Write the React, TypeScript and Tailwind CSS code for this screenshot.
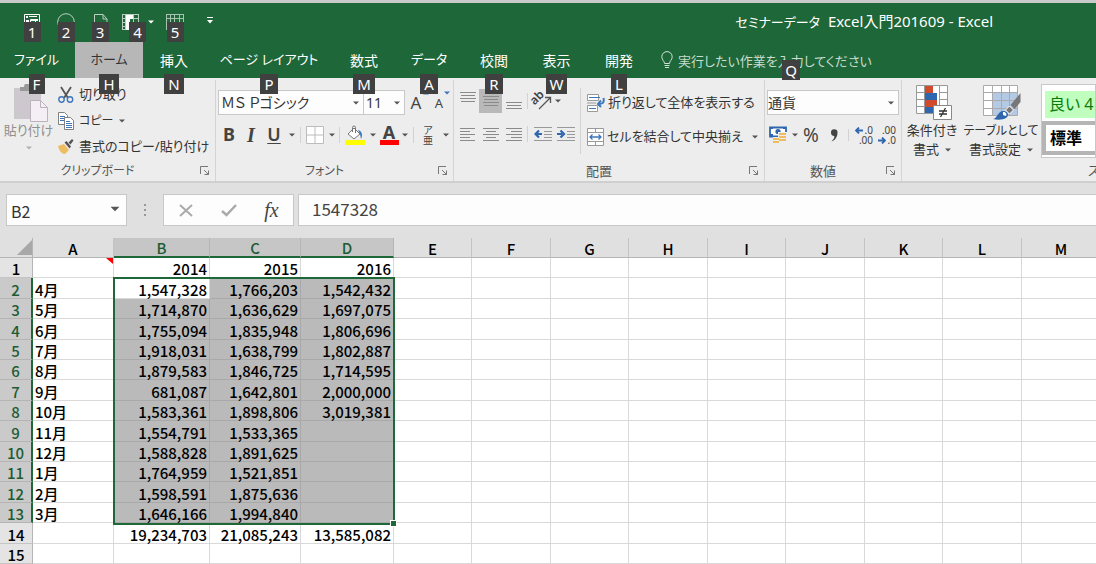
import React from "react";
import type { ReactNode } from "react";

const UI = "font-['Noto_Sans','Noto_Sans_CJK_JP',sans-serif] [font-feature-settings:'palt']";

function KeyTip({ children, className = "" }: { children: string; className?: string }) {
  return (
    <span
      className={`pointer-events-none absolute z-10 flex h-5 items-center justify-center bg-[#404040] px-1 text-[15px] leading-5 text-white ${className}`}
    >
      {children}
    </span>
  );
}

function Arrow({ className = "text-[#555]" }: { className?: string }) {
  return (
    <svg width="6" height="4" viewBox="0 0 6 4" className={`shrink-0 ${className}`} aria-hidden="true">
      <path d="M0 0.5h6L3 3.5z" fill="currentColor" />
    </svg>
  );
}

function Btn({ label, className, children }: { label: string; className: string; children: ReactNode }) {
  return (
    <button type="button" aria-label={label} className={`flex shrink-0 items-center justify-center ${className}`}>
      {children}
    </button>
  );
}

function Sep({ className = "h-4" }: { className?: string }) {
  return <span className={`w-px shrink-0 bg-[#d2d2d2] ${className}`} />;
}

function Lines({ rows, y = 1 }: { rows: [number, number][]; y?: number }) {
  return (
    <svg width="16" height="24" viewBox="0 0 16 24" aria-hidden="true">
      {rows.map(([a, b], i) => (
        <path key={i} d={`M${a} ${y + i * 3 + 0.5}H${b}`} stroke="#8a8a8a" strokeWidth="1" />
      ))}
    </svg>
  );
}

function Group({
  title,
  className,
  titleSize = "text-[13px]",
  children,
}: {
  title: string;
  className: string;
  titleSize?: string;
  children: ReactNode;
}) {
  return (
    <section aria-label={title} className={`flex shrink-0 flex-col border-r border-[#d4d4d4] ${className}`}>
      <div className="flex h-[82px]">{children}</div>
      <div className="flex h-5 items-center pr-1">
        <span className={`flex-1 pr-1 text-center leading-[18px] text-[#555] ${titleSize}`}>{title}</span>
        <Btn label={`${title}の設定`} className="size-3">
          <svg width="10" height="10" viewBox="0 0 10 10" fill="none" stroke="#777" aria-hidden="true">
            <path d="M0.5 8V0.5H8M4 4l4.5 4.5M8.5 4.5v4h-4" />
          </svg>
        </Btn>
      </div>
    </section>
  );
}

function Drop({
  label,
  value,
  className,
  arrow = "right-1",
  pad = "pl-0.5",
}: {
  label: string;
  value: string;
  className: string;
  arrow?: string;
  pad?: string;
}) {
  return (
    <div className={`relative flex shrink-0 items-center border border-[#c8c8c8] bg-[#fdfdfd] ${className}`}>
      <select
        aria-label={label}
        defaultValue={value}
        className={`h-full w-full appearance-none bg-transparent text-[#333] outline-none [font-feature-settings:'palt'] ${pad}`}
      >
        <option>{value}</option>
      </select>
      <Arrow className={`pointer-events-none absolute text-[#555] ${arrow}`} />
    </div>
  );
}

const TABS: [string, string, string][] = [
  ["ファイル", "F", "w-[73px] text-[13px]"],
  ["ホーム", "H", "w-[70px] text-[13px]"],
  ["挿入", "N", "w-[62px]"],
  ["ページ レイアウト", "P", "w-32 text-[13px]"],
  ["数式", "M", "w-[62px]"],
  ["データ", "A", "w-[68px] text-[13px]"],
  ["校閲", "R", "w-[62px]"],
  ["表示", "W", "w-[63px]"],
  ["開発", "L", "w-[62px]"],
];

function TitleBar() {
  return (
    <header className="flex h-[39px] text-white">
      <div className="flex w-[230px] shrink-0 pt-[9px] pl-[23px]">
        <Btn label="上書き保存" className="relative h-5 w-[18px]">
          <svg width="18" height="18" viewBox="0 0 18 18" fill="none" stroke="#fff" aria-hidden="true">
            <path d="M1.500 1.500h15v15h-15z" />
            <path d="M3 3h2v2H3zM6 3h8v1H6zM3 7h3v3H3zM8 6h7v2H8z" fill="#fff" stroke="none" />
            <path d="M7.500 10V6.500h2M12.500 6v4" />
          </svg>
          <KeyTip className="top-[10px] w-[17px]">1</KeyTip>
        </Btn>
        <Btn label="円" className="relative ml-4 h-5 w-[18px]">
          <svg width="18" height="18" viewBox="0 0 18 18" fill="none" stroke="#b9d0c1" aria-hidden="true">
            <circle cx="9" cy="9" r="8.3" />
          </svg>
          <KeyTip className="top-[10px] w-[17px]">2</KeyTip>
        </Btn>
        <Btn label="新規作成" className="relative ml-4 h-5 w-[18px]">
          <svg width="18" height="18" viewBox="0 0 18 18" fill="none" stroke="#b9d0c1" aria-hidden="true">
            <path d="M3.500 16.500V1.500h8.500l4 4.500v10.500zM12 1.500V6h4" />
          </svg>
          <KeyTip className="top-[10px] w-[17px]">3</KeyTip>
        </Btn>
        <Btn label="ウィンドウ枠の固定" className="relative ml-3 h-5 w-[18px]">
          <svg width="18" height="18" viewBox="0 0 18 18" fill="none" stroke="#b9d0c1" aria-hidden="true">
            <path d="M1 1.500h17M1 5.500h17M1 9.500h17M1 13.500h17M1 16.500h17M1.500 1v16M4.500 1v16M12.500 1v16M17.500 1v16" />
            <path d="M5 2h7v4H9v11H5z" fill="#fff" stroke="none" />
          </svg>
          <KeyTip className="top-[10px] left-[8px] w-[17px]">4</KeyTip>
        </Btn>
        <Btn label="枠固定の一覧" className="ml-2 h-5 w-[8px]">
          <Arrow className="text-white" />
        </Btn>
        <Btn label="テーブル" className="relative ml-[11px] h-5 w-[18px]">
          <svg width="18" height="18" viewBox="0 0 18 18" fill="none" stroke="#a5c3b0" aria-hidden="true">
            <path d="M0 1.500h18M0 5.500h18M0 9.500h18M0 13.500h18M0.500 1v16M4.500 1v16M8.500 1v16M13.500 1v16M17.500 1v16" />
          </svg>
          <KeyTip className="top-[10px] w-[17px]">5</KeyTip>
        </Btn>
        <Btn label="クイック アクセス ツール バーのカスタマイズ" className="ml-5 h-4 w-3">
          <svg width="6" height="7" viewBox="0 0 6 7" fill="#fff" aria-hidden="true">
            <path d="M0 0h6v1H0zM0 3h6L3 6.500z" />
          </svg>
        </Btn>
      </div>
      <h1 className="flex-1 pr-[103px] text-right text-[15px] leading-9 whitespace-pre">
        <span className="text-[13px]">セミナーデータ</span>
        {"  Excel入門201609 - Excel"}
      </h1>
    </header>
  );
}

function Tabs() {
  return (
    <nav className="flex h-9 text-[14px] text-white">
      {TABS.map(([name, key, w], i) => (
        <button
          key={key}
          type="button"
          className={`relative flex shrink-0 items-center justify-center whitespace-nowrap ${w} ${
            i === 1 ? "border-l-2 border-[#1e6738] bg-[#b7b7b7] text-[#333]" : ""
          }`}
        >
          {name}
          <KeyTip className="top-8 min-w-4">{key}</KeyTip>
        </button>
      ))}
      <label className="relative flex items-center gap-[5px] pl-[11px]">
        <svg width="12" height="18" viewBox="0 0 12 18" fill="none" stroke="#cfe0d5" aria-hidden="true">
          <path d="M3.500 12.500C3.500 10 0.800 9 0.800 5.800a5.200 5.200 0 0 1 10.400 0C11.200 9 8.500 10 8.500 12.500zM3.500 14.500h5M4 16.500h4" />
        </svg>
        <input
          placeholder="実行したい作業を入力してください"
          aria-label="操作アシスト"
          className="w-[230px] bg-transparent pt-1 text-[13px] outline-none placeholder:text-[#c9dccf] placeholder:opacity-100"
        />
        <KeyTip className="top-[18px] left-[132px] w-[18px]">Q</KeyTip>
      </label>
    </nav>
  );
}

function Clipboard() {
  return (
    <Group title="クリップボード" titleSize="text-[12px]" className="w-[216px]">
      <button type="button" className="flex w-[57px] shrink-0 flex-col items-center pt-1 text-[13px] text-[#8f8f8f]">
        <svg width="36" height="38" viewBox="0 0 36 38" aria-hidden="true" className="ml-1">
          <path d="M1 4h27v31H1z" fill="#cdc8cd" />
          <path d="M7 7V3h4a4 4 0 0 1 8 0h4v4z" fill="#999" />
          <path d="M17.500 16.500h10l7 7v14h-17z" fill="#f4eef5" stroke="#bcb2bd" />
          <path d="M27.500 16.500v7h7" fill="none" stroke="#bcb2bd" />
        </svg>
        <span className="leading-4">貼り付け</span>
        <Arrow className="mt-2 text-[#b0b0b0]" />
      </button>
      <div className="flex flex-col pt-0.5 text-[13px] text-[#333]">
        <button type="button" className="flex h-[26px] items-center gap-1">
          <svg width="18" height="18" viewBox="0 0 18 18" fill="none" aria-hidden="true">
            <path d="M4 1l7 11M14 1L7 12" stroke="#555" strokeWidth="1.800" />
            <circle cx="4.500" cy="13.500" r="2.700" stroke="#3d76bb" strokeWidth="1.400" />
            <circle cx="13" cy="13.500" r="2.700" stroke="#3d76bb" strokeWidth="1.400" />
          </svg>
          切り取り
        </button>
        <button type="button" className="flex h-[26px] items-center gap-1">
          <svg width="18" height="18" viewBox="0 0 18 18" fill="#fff" stroke="#808080" aria-hidden="true">
            <path d="M1.500 0.500h6l3 3v9h-9z" />
            <path d="M3 4.500h5M3 6.500h6M3 8.500h6" stroke="#3d76bb" />
            <path d="M7.500 5.500h6l3 3v9h-9z" />
            <path d="M9 9.500h4M9 11.500h6M9 13.500h6M9 15.500h6" stroke="#3d76bb" />
          </svg>
          <span className="text-[12px]">コピー</span>
          <Arrow className="ml-0.5 text-[#555]" />
        </button>
        <button type="button" className="flex h-[26px] items-center gap-1 whitespace-nowrap">
          <svg width="18" height="18" viewBox="0 0 18 18" aria-hidden="true">
            <path d="M1 8l6-2 5 6-4 4c-3 0-6-3-7-8z" fill="#edbd62" />
            <path d="M7.500 4.500L9.500 3l4.500 5.500-1.500 2z" fill="#555" />
            <path d="M11.500 4.500L15 1l1.500 1.500-3 4z" fill="#555" />
          </svg>
          書式のコピー/貼り付け
        </button>
      </div>
    </Group>
  );
}

function FontGroup() {
  return (
    <Group title="フォント" titleSize="text-[12px]" className="w-[238px]">
      <div className="flex flex-col pl-0.5 text-[#444]">
        <div className="flex items-center pt-2.5 text-[14px]">
          <Drop label="フォント名" value="ＭＳ Ｐゴシック" className="h-[25px] w-[146px]" />
          <Drop label="フォント サイズ" value="11" className="-ml-px h-[25px] w-[42px]" />
          <Btn label="フォント サイズの拡大" className="relative ml-0.5 w-[18px] text-[17px] leading-6">
            A<Arrow className="absolute top-0 -right-1 rotate-180 text-[#3d76bb]" />
          </Btn>
          <Btn label="フォント サイズの縮小" className="relative ml-[5px] w-[18px] text-[13px] leading-6">
            A<Arrow className="absolute top-0 -right-0.5 text-[#3d76bb]" />
          </Btn>
        </div>
        <div className="flex h-[39px] items-center text-[18px]">
          <Btn label="太字" className="w-[22px] font-bold">B</Btn>
          <Btn label="斜体" className="w-[22px] font-['Liberation_Serif',serif] text-[20px] font-bold italic">I</Btn>
          <Btn label="下線" className="w-6 font-semibold underline underline-offset-2">U</Btn>
          <Btn label="下線の種類" className="w-3"><Arrow /></Btn>
          <Sep className="ml-[2px] h-4" />
          <Btn label="罫線" className="w-[27px]">
            <svg width="18" height="18" viewBox="0 0 18 18" fill="#fff" stroke="#bcbcbc" aria-hidden="true">
              <path d="M0.500 0.500h17v17H0.500zM9 0.500v17M0.500 9h17" />
            </svg>
          </Btn>
          <Btn label="罫線の種類" className="w-2"><Arrow /></Btn>
          <Sep className="ml-[3px] h-4" />
          <Btn label="塗りつぶしの色" className="ml-px w-7">
            <svg width="20" height="20" viewBox="0 0 20 20" aria-hidden="true">
              <path d="M0 15h20v5H0z" fill="#ff0" />
              <path d="M9 3l6 6-6 5-6-5z" fill="#fff" stroke="#777" />
              <path d="M7.500 7V2.500a1.500 1.500 0 0 1 3 0V8" fill="none" stroke="#777" />
              <path d="M13 5c4 1 5 5 3 9l-1-5z" fill="#3d76bb" />
            </svg>
          </Btn>
          <Btn label="塗りつぶしの色の一覧" className="w-2"><Arrow /></Btn>
          <Btn label="フォントの色" className="w-6 flex-col">
            <span className="font-bold leading-4">A</span>
            <span className="h-[5px] w-[19px] bg-[#f00]" />
          </Btn>
          <Btn label="フォントの色の一覧" className="w-2"><Arrow /></Btn>
          <Sep className="ml-1 h-4" />
          <Btn label="ふりがな" className="w-7 flex-col text-[10px] leading-[10px]">
            <span>ア</span>
            <span>亜</span>
          </Btn>
          <Btn label="ふりがなの一覧" className="w-2"><Arrow /></Btn>
        </div>
      </div>
    </Group>
  );
}

function Alignment() {
  return (
    <Group title="配置" className="w-[311px]">
      <div className="flex w-[126px] shrink-0 flex-col pl-[3px] text-[#444]">
        <div className="flex items-center pt-[9px]">
          <Btn label="上揃え" className="h-6 w-[22px]"><Lines rows={[[0, 16], [1, 15], [0, 16], [1, 15]]} y={3} /></Btn>
          <Btn label="上下中央揃え" className="h-6 w-[23px] bg-[#b9b9b9]"><Lines rows={[[0, 16], [1, 15], [0, 16], [1, 15]]} y={7} /></Btn>
          <Btn label="下揃え" className="h-6 w-[23px]"><Lines rows={[[0, 16], [1, 15], [0, 16]]} y={13} /></Btn>
          <Sep className="ml-0.5 h-4" />
          <Btn label="方向" className="ml-1.5 w-[18px]">
            <svg width="18" height="18" viewBox="0 0 18 18" className="overflow-visible" aria-hidden="true">
              <text x="0" y="12" fontSize="12" fontWeight="600" fill="#444" transform="rotate(-45 2 12)">ab</text>
              <path d="M5 17L16 6M11 5.500h5.500V11" fill="none" stroke="#555" strokeWidth="1.300" />
            </svg>
          </Btn>
          <Btn label="方向の一覧" className="ml-[2px] w-2"><Arrow /></Btn>
        </div>
        <div className="flex h-[42px] items-center">
          <Btn label="左揃え" className="w-[22px]"><Lines rows={[[0, 15], [0, 10], [0, 15], [0, 10], [0, 15]]} y={6} /></Btn>
          <Btn label="中央揃え" className="w-6"><Lines rows={[[0, 16], [3, 13], [0, 16], [3, 13], [0, 16]]} y={6} /></Btn>
          <Btn label="右揃え" className="w-[22px]"><Lines rows={[[0, 16], [5, 16], [0, 16], [5, 16], [0, 16]]} y={6} /></Btn>
          <Sep className="ml-0.5 h-4" />
          <Btn label="インデントを減らす" className="ml-1.5 w-[18px]">
            <svg width="18" height="14" viewBox="0 0 18 14" aria-hidden="true">
              <path d="M0 0.500h18M10 4.500h8M10 7.500h8M10 10.500h8M0 13.500h18" stroke="#999" />
              <path d="M8 7H3M5 3.500L1.500 7 5 10.500" stroke="#2f67ae" strokeWidth="2.200" fill="none" />
            </svg>
          </Btn>
          <Btn label="インデントを増やす" className="ml-[5px] w-[18px]">
            <svg width="18" height="14" viewBox="0 0 18 14" aria-hidden="true">
              <path d="M0 0.500h18M10 4.500h8M10 7.500h8M10 10.500h8M0 13.500h18" stroke="#999" />
              <path d="M0 7h5M3.500 3.500L7 7l-3.500 3.500" stroke="#2f67ae" strokeWidth="2.200" fill="none" />
            </svg>
          </Btn>
        </div>
      </div>
      <Sep className="mt-2 h-[66px]" />
      <div className="flex flex-1 flex-col pt-1.5 pl-1.5 text-[13px] text-[#333]">
        <button type="button" className="flex h-[34px] items-center gap-[3px] whitespace-nowrap">
          <svg width="18" height="18" viewBox="0 0 18 18" fill="none" aria-hidden="true">
            <path d="M0.500 0.500h11v6h-11zM0.500 11.500h10v6h-10z" fill="#fff" stroke="#999" />
            <path d="M2 3.500h11M2 14.500h7" stroke="#3d76bb" />
            <path d="M0 9h9" stroke="#999" />
            <path d="M16.500 4c1 5-1 6-5 6M14 6.500L11 10l3 3" stroke="#3d76bb" strokeWidth="2" />
          </svg>
          折り返して全体を表示する
        </button>
        <button type="button" className="flex h-[34px] items-center gap-[3px] whitespace-nowrap">
          <svg width="17" height="18" viewBox="0 0 17 18" fill="none" aria-hidden="true">
            <path d="M0.500 0.500h16v17h-16zM0.500 4.500h16M0.500 13.500h16M8.500 0.500v4M8.500 13.500v4" fill="#fff" stroke="#999" />
            <path d="M3 9h11M5.500 6.500L3 9l2.500 2.500M11.500 6.500L14 9l-2.500 2.500" stroke="#3d76bb" strokeWidth="1.300" />
          </svg>
          セルを結合して中央揃え
          <Arrow className="ml-1.5 text-[#555]" />
        </button>
      </div>
    </Group>
  );
}

function NumberGroup() {
  return (
    <Group title="数値" className="w-[137px]">
      <div className="flex flex-col pl-0.5 text-[#444]">
        <div className="flex pt-2.5 text-[14px]">
          <Drop label="表示形式" value="通貨" pad="pl-0" className="h-[25px] w-[132px]" />
        </div>
        <div className="flex h-10 items-center">
          <Btn label="通貨表示形式" className="w-[22px]">
            <svg width="18" height="18" viewBox="0 0 18 18" aria-hidden="true">
              <path d="M1 1.500h16v9H1z" fill="#fff" stroke="#2f67ae" strokeWidth="1.800" />
              <path d="M1 1h3v2H1zM14 1h3v2h-3zM1 8h3v2H1z" fill="#2f67ae" />
              <circle cx="9" cy="5.500" r="2.600" fill="#2f67ae" />
              <path d="M9 6h9v11H9zM4 11h7v7H4z" fill="#ededed" />
              <path d="M10 7h7v2h-7zM10 10h7v2h-7zM10 13h7v2h-7zM4 12h6v2H4zM4 15h6v2H4z" fill="#edbd62" />
            </svg>
          </Btn>
          <Btn label="通貨の一覧" className="ml-0.5 w-2"><Arrow /></Btn>
          <Btn label="パーセント スタイル" className="w-6 text-[19px]">%</Btn>
          <Btn label="桁区切りスタイル" className="w-[22px]">
            <svg width="8" height="13" viewBox="0 0 8 13" aria-hidden="true">
              <path d="M1 3.500a3 3 0 0 1 6.500 0C7.500 8 5 11.500 1.500 12.500 3.500 10.500 4.500 9 4.300 7 2 7 1 5.500 1 3.500z" fill="#444" />
            </svg>
          </Btn>
          <Sep className="ml-[3px] h-3" />
          <Btn label="小数点以下の表示桁数を増やす" className="ml-1.5 w-[18px] flex-col text-[10px] leading-[10px]">
            <span className="flex w-full items-center justify-between">
              <svg width="8" height="7" viewBox="0 0 8 7" fill="none" stroke="#2f67ae" strokeWidth="1.800" aria-hidden="true"><path d="M8 3.500H1.500M4 0.500l-3 3 3 3" /></svg>.0
            </span>
            <span className="w-full text-right">.00</span>
          </Btn>
          <Btn label="小数点以下の表示桁数を減らす" className="ml-[5px] w-[18px] flex-col text-[10px] leading-[10px]">
            <span className="w-full text-right">.00</span>
            <span className="flex w-full items-center justify-between">
              <svg width="8" height="7" viewBox="0 0 8 7" fill="none" stroke="#2f67ae" strokeWidth="1.800" aria-hidden="true"><path d="M0 3.500h6.500M4 0.500l3 3-3 3" /></svg>.0
            </span>
          </Btn>
        </div>
      </div>
    </Group>
  );
}

function Styles() {
  return (
    <section aria-label="スタイル" className="flex min-w-0 flex-1 flex-col overflow-hidden">
      <div className="flex h-[82px] text-[13px] leading-[19px] text-[#333]">
        <button type="button" className="flex w-[60px] shrink-0 flex-col items-center pt-1 whitespace-nowrap">
          <svg width="36" height="36" viewBox="0 0 36 36" className="ml-1" aria-hidden="true">
            <path d="M0.500 1.500h31v28H0.500z" fill="#fff" />
            <path d="M9 2h8v7H9zM9 16h12v7H9z" fill="#d04a2b" />
            <path d="M9 9h12v7H9zM9 23h8v6H9z" fill="#2f67ae" />
            <path d="M0.500 1.500h31v28H0.500zM8.500 1.500v28M23.500 1.500v28M0.500 8.500h8M23.500 8.500h8M0.500 15.500h8M23.500 15.500h8M0.500 22.500h8M23.500 22.500h8" fill="none" stroke="#999" />
            <path d="M17.500 21.500h18v14h-18z" fill="#fff" stroke="#888" />
            <path d="M23 27h8M23 30h8M29.500 24l-5 9" stroke="#333" strokeWidth="1.300" />
          </svg>
          <span className="mt-px">条件付き</span>
          <span className="flex items-center gap-1.5">書式<Arrow /></span>
        </button>
        <button type="button" className="flex w-[78px] shrink-0 flex-col items-center pt-1 whitespace-nowrap">
          <svg width="38" height="36" viewBox="0 0 38 36" className="ml-0.5" aria-hidden="true">
            <path d="M0.500 1.500h34v30h-34z" fill="#fff" />
            <path d="M9 8h25v23H9z" fill="#b4c9e4" />
            <path d="M0.500 1.500h34v30h-34zM9.500 1.500v30M18.500 1.500v30M26.500 1.500v30M0.500 8.500h34M0.500 16.500h34M0.500 24.500h34" fill="none" stroke="#aaa" />
            <path d="M37.500 9v9l-6 7-4-4z" fill="#777" />
            <path d="M26.500 22l4 4-4 4-4-4z" fill="#777" stroke="#fff" />
            <path d="M10 35c5-1 5-9 11-8 5 1 5 5 2 7-3 2-9 2-13 1z" fill="#2f67ae" />
            <path d="M20 28c3 0 4 2 3 4l-3-1z" fill="#fff" />
          </svg>
          <span className="mt-px text-[12px]">テーブルとして</span>
          <span className="flex items-center gap-1.5">書式設定<Arrow /></span>
        </button>
        <div className="mt-1 ml-px flex h-[74px] flex-1 flex-col border border-[#c8c8c8] bg-white text-[16px] whitespace-nowrap">
          <button type="button" className="mt-1.5 ml-[3px] h-[27px] bg-[#c0ffbd] pl-1 text-left text-[#0a7a0a]">良い 4</button>
          <button type="button" className="mt-[3px] h-[34px] border-4 border-r-0 border-[#b5b5b5] bg-white pl-1 text-left font-bold text-black">標準</button>
        </div>
      </div>
      <div className="flex h-5 items-center pl-[186px] text-[13px] whitespace-nowrap text-[#555]">スタイル</div>
    </section>
  );
}

function FormulaBar() {
  return (
    <div className="flex h-[57px] shrink-0 items-start border-t-2 border-[#cfcfcf] bg-[#e0e0e0] pt-[11px] pl-1.5 font-['Noto_Sans_CJK_JP',sans-serif] text-[16px]">
      <Drop label="名前ボックス" value="B2" pad="pl-1 pt-0.5" className="h-8 w-[121px]" arrow="right-2 top-3 scale-150" />
      <svg width="4" height="32" viewBox="0 0 4 32" fill="#999" className="mx-4 shrink-0" aria-hidden="true">
        <path d="M1 10h2v2H1zM1 15h2v2H1zM1 20h2v2H1z" />
      </svg>
      <div className="flex h-8 w-[131px] shrink-0 items-center justify-around border border-[#c8c8c8] bg-[#fdfdfd]">
        <Btn label="キャンセル" className="w-6">
          <svg width="14" height="13" viewBox="0 0 14 13" aria-hidden="true"><path d="M1 1l12 11M13 1L1 12" stroke="#aaa" strokeWidth="2" /></svg>
        </Btn>
        <Btn label="入力" className="w-6">
          <svg width="16" height="13" viewBox="0 0 16 13" fill="none" aria-hidden="true"><path d="M1 7l4.500 4L15 1" stroke="#aaa" strokeWidth="2.500" /></svg>
        </Btn>
        <Btn label="関数の挿入" className="w-6 font-['Liberation_Serif',serif] text-[20px] text-[#444] italic">fx</Btn>
      </div>
      <input
        aria-label="数式バー"
        defaultValue="1547328"
        className="ml-1 h-8 min-w-0 flex-1 border border-r-0 border-[#c8c8c8] bg-[#fdfdfd] pb-1 pl-[13px] text-[17px] text-[#444] outline-none"
      />
    </div>
  );
}

const COLS: [string, string][] = [
  ["A", "w-[81px]"],
  ["B", "w-24"],
  ["C", "w-[91px]"],
  ["D", "w-[93px]"],
  ["E", "w-[78px]"],
  ["F", "w-[79px]"],
  ["G", "w-[78px]"],
  ["H", "w-[79px]"],
  ["I", "w-[78px]"],
  ["J", "w-[79px]"],
  ["K", "w-[78px]"],
  ["L", "w-[79px]"],
  ["M", "w-[79px]"],
];

const DATA: string[][] = [
  ["", "2014", "2015", "2016"],
  ["4月", "1,547,328", "1,766,203", "1,542,432"],
  ["5月", "1,714,870", "1,636,629", "1,697,075"],
  ["6月", "1,755,094", "1,835,948", "1,806,696"],
  ["7月", "1,918,031", "1,638,799", "1,802,887"],
  ["8月", "1,879,583", "1,846,725", "1,714,595"],
  ["9月", "681,087", "1,642,801", "2,000,000"],
  ["10月", "1,583,361", "1,898,806", "3,019,381"],
  ["11月", "1,554,791", "1,533,365", ""],
  ["12月", "1,588,828", "1,891,625", ""],
  ["1月", "1,764,959", "1,521,851", ""],
  ["2月", "1,598,591", "1,875,636", ""],
  ["3月", "1,646,166", "1,994,840", ""],
  ["", "19,234,703", "21,085,243", "13,585,082"],
  ["", "", "", ""],
];

function Sheet() {
  return (
    <main className="relative overflow-hidden font-['Noto_Sans_CJK_JP',sans-serif] text-[15px] leading-4 font-medium text-black">
      <table className="w-full table-fixed border-separate border-spacing-0">
        <colgroup>
          <col className="w-[33px]" />
          {COLS.map(([c, w]) => (
            <col key={c} className={w} />
          ))}
        </colgroup>
        <thead>
          <tr className="h-5 bg-[#e0e0e0]">
            <th className="border-r border-b border-[#b5b5b5] p-0">
              <svg width="15" height="15" viewBox="0 0 15 15" className="ml-auto" aria-hidden="true">
                <path d="M15 0v15H0z" fill="#a8a8a8" />
              </svg>
            </th>
            {COLS.map(([c], i) => (
              <th
                key={c}
                scope="col"
                className={`border-r p-0 pt-0.5 font-medium ${
                  i >= 1 && i <= 3
                    ? "border-b-2 border-r-[#b5b5b5] border-b-[#1e6738] bg-[#c6c6c6] text-[#1c5c34]"
                    : "border-b border-r-[#c4c4c4] border-b-[#b5b5b5]"
                }`}
              >
                {c}
              </th>
            ))}
          </tr>
        </thead>
        <tbody>
          {DATA.map((row, r) => {
            const inRange = r >= 1 && r <= 12;
            return (
              <tr key={r} className={r % 5 === 1 || r % 5 === 3 ? "h-[21px]" : "h-5"}>
                <th
                  scope="row"
                  className={`border-b p-0 pt-[3px] font-medium ${
                    inRange
                      ? "border-r-2 border-r-[#1e6738] border-b-[#b5b5b5] bg-[#cacaca] text-[#1c5c34]"
                      : "border-r border-r-[#b5b5b5] border-b-[#c4c4c4] bg-[#e4e4e4]"
                  }`}
                >
                  {r + 1}
                </th>
                {COLS.map(([c], i) => {
                  const selected = inRange && i >= 1 && i <= 3 && !(r === 1 && i === 1);
                  return (
                    <td
                      key={c}
                      className={`relative border-r border-b p-0 pt-[3px] whitespace-nowrap ${
                        i === 0 ? "pl-0.5 text-left" : "pr-0.5 text-right"
                      } ${selected ? "border-[#a9a9a9] bg-[#bababa]" : "border-[#d9d9d9] bg-white"}`}
                    >
                      {row[i] ?? ""}
                      {r === 0 && i === 0 && (
                        <svg width="7" height="6" viewBox="0 0 7 6" className="absolute top-0 right-0" aria-hidden="true">
                          <path d="M0 0h7v6z" fill="#f00" />
                        </svg>
                      )}
                    </td>
                  );
                })}
              </tr>
            );
          })}
        </tbody>
      </table>
      <div className="pointer-events-none absolute top-[39px] left-[113px] h-[248px] w-[282px] border-2 border-[#1e6738]">
        <span className="absolute -right-[3px] -bottom-[3px] size-[5px] bg-[#1e6738] outline outline-white" />
      </div>
    </main>
  );
}

export default function App() {
  return (
    <div className={`flex h-screen flex-col overflow-hidden bg-white ${UI}`}>
      <div className="shrink-0 border-t-[3px] border-[#c9c9c9] bg-[#1e6738]">
        <TitleBar />
        <Tabs />
      </div>
      <div className="flex h-[103px] shrink-0 bg-[#ededed] pt-[2px]">
        <Clipboard />
        <FontGroup />
        <Alignment />
        <NumberGroup />
        <Styles />
      </div>
      <FormulaBar />
      <Sheet />
    </div>
  );
}
